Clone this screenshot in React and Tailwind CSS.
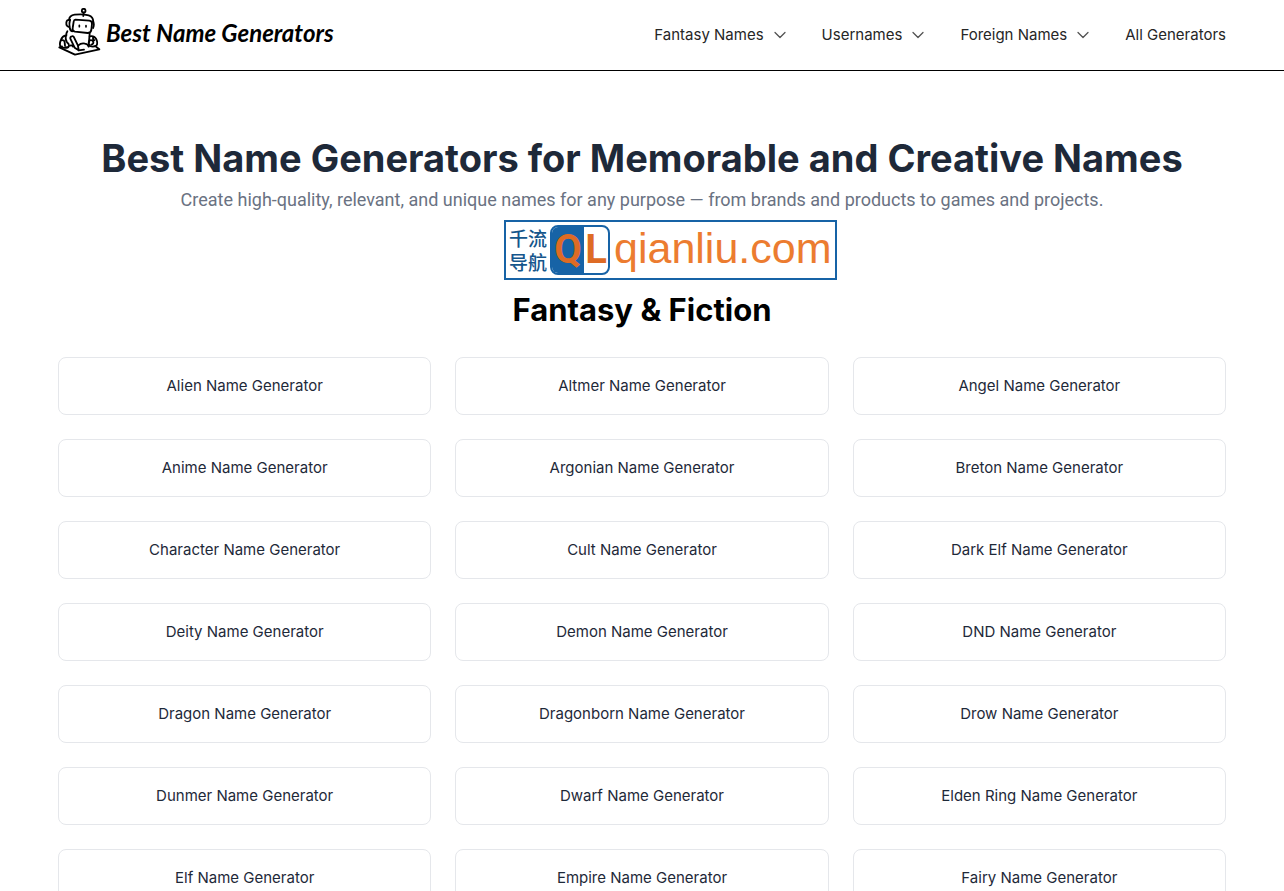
import { useState } from "react";
import { ChevronDown } from "lucide-react";

const navItems = [
    { label: "Fantasy Names", menu: true },
    { label: "Usernames", menu: true },
    { label: "Foreign Names", menu: true },
    { label: "All Generators", menu: false },
];

const fantasyNames = [
    "Alien", "Altmer", "Angel",
    "Anime", "Argonian", "Breton",
    "Character", "Cult", "Dark Elf",
    "Deity", "Demon", "DND",
    "Dragon", "Dragonborn", "Drow",
    "Dunmer", "Dwarf", "Elden Ring",
    "Elf", "Empire", "Fairy",
];

const slug = (name) => `#${name.toLowerCase().replace(/ /g, "-")}-name-generator`;

function RobotLogo() {
    return (
        <svg viewBox="24 24 132 150" className="h-[50px] w-11 shrink-0" fill="none" stroke="#000" strokeWidth="5.5" strokeLinecap="round" strokeLinejoin="round" aria-hidden="true">
            {/* antenna and helmet */}
            <circle cx="101" cy="32" r="5.5" />
            <path d="M101 38 L100 48" />
            <path d="M57 60 Q58 46 74 44 Q98 41 116 46 Q130 50 130 66" />
            <path d="M60 60 Q50 58 49 68 Q48 80 58 81" />
            <path d="M60 59 Q57 70 59 82 Q60 92 67 94" />
            <path d="M129 64 Q134 73 129 84" />
            {/* face */}
            <path d="M76 59 L118 62 Q127 63 126 72 L124 90 Q122 99 113 99 L75 95 Q66 93 68 84 L71 65 Q72 59 76 59 Z" />
            <path d="M88 76 V80 M108 77 V81" strokeWidth="5" />
            {/* body */}
            <path d="M52 94 Q48 99 49 107 M119 100 L117 126" />
            {/* left arm */}
            <path d="M48 106 Q37 108 33 119 Q27 133 32 140 Q42 146 54 142" />
            <path d="M47 108 Q46 120 51 127 Q57 130 57 138 Q55 144 46 141 M35 121 Q43 119 44 127 L45 137" />
            {/* pencil */}
            <path d="M66 109 Q60 109 61 116 L74 143 L86 151 L84 137 L72 112 Q69 107 66 109 Z" />
            {/* writing hand */}
            <path d="M84 137 Q94 128 105 131 Q114 133 116 140 M60 137 Q66 134 69 140 M86 151 L102 149" />
            {/* right hand */}
            <path d="M119 109 Q132 106 138 116 Q145 128 139 137 Q130 142 119 138 Q113 129 119 121 Q128 119 130 126 Q131 132 124 134 M130 111 Q127 117 133 121" />
            {/* tablet */}
            <path d="M28 142 L75 164 L148 148 L139 141 M28 142 L36 139" />
        </svg>
    );
}

function Header() {
    const [open, setOpen] = useState(null);

    return (
        <header className="border-b border-black bg-white">
            <div className="mx-auto flex h-[70px] max-w-[1200px] items-center justify-between px-4">
                <a href="#home" className="flex items-center gap-1 pb-1">
                    <RobotLogo />
                    <span className="whitespace-nowrap font-[Lato,sans-serif] text-[24px] leading-8 font-bold italic text-black">
                        Best Name Generators
                    </span>
                </a>
                <nav className="flex items-center gap-8 text-[15px] leading-6 text-neutral-800">
                    {navItems.map((item) =>
                        item.menu ? (
                            <button
                                key={item.label}
                                type="button"
                                aria-expanded={open === item.label}
                                onClick={() => setOpen(open === item.label ? null : item.label)}
                                className="flex items-center gap-1.5 whitespace-nowrap"
                            >
                                {item.label}
                                <ChevronDown size={20} strokeWidth={1.5} className="text-neutral-600" />
                            </button>
                        ) : (
                            <a key={item.label} href="#all" className="whitespace-nowrap">{item.label}</a>
                        )
                    )}
                </nav>
            </div>
        </header>
    );
}

function SiteBadge() {
    return (
        <div className="absolute top-full left-1/2 -ml-[138px] mt-1.5 flex h-[60px] w-[333px] items-center border-2 border-[#1763a6] bg-white">
            <div className="w-11 shrink-0 text-center font-['Noto_Sans_CJK_SC',sans-serif] text-[19px] leading-6 font-medium text-[#15568c]">
                <div>千流</div>
                <div>导航</div>
            </div>
            <div className="flex h-[50px] w-[60px] shrink-0 overflow-hidden rounded-lg border-2 border-[#1763a6] font-[Roboto,sans-serif] text-[40px] leading-[46px] font-bold text-[#de6b25]">
                <span className="flex w-8 justify-center bg-[#1763a6]">Q</span>
                <span className="flex flex-1 justify-center">L</span>
            </div>
            <span className="pb-1 pl-1 font-['Liberation_Sans',sans-serif] text-[43px] leading-[48px] text-[#ec7c30]">
                qianliu.com
            </span>
        </div>
    );
}

export default function App() {
    return (
        <div className="min-h-screen bg-white font-[Inter,sans-serif]">
            <Header />
            <main className="mx-auto max-w-[1200px] px-4 pt-16 pb-16">
                <div className="relative text-center">
                    <h1 className="text-[38px] leading-[46px] font-bold text-gray-800">
                        Best Name Generators for Memorable and Creative Names
                    </h1>
                    <p className="mt-[5px] font-[Roboto,sans-serif] text-[18px] leading-7 text-gray-500">
                        Create high-quality, relevant, and unique names for any purpose — from brands and products to games and projects.
                    </p>
                    <SiteBadge />
                </div>

                <section className="mt-[76px]">
                    <h2 className="text-center text-[31px] leading-10 font-bold text-black">Fantasy &amp; Fiction</h2>
                    <div className="mt-[27px] grid grid-cols-3 gap-6">
                        {fantasyNames.map((name) => (
                            <a
                                key={name}
                                href={slug(name)}
                                className="rounded-lg border border-gray-200 bg-white p-4 text-center text-[15px] leading-6 text-gray-800 hover:bg-gray-50"
                            >
                                {name} Name Generator
                            </a>
                        ))}
                    </div>
                </section>
            </main>
        </div>
    );
}
